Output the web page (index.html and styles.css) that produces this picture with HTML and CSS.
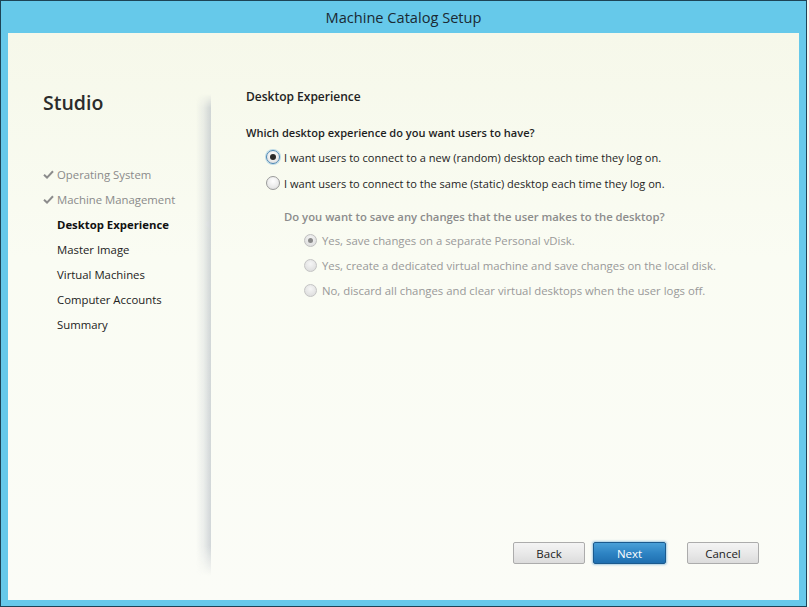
FILE: index.html
```html
<!DOCTYPE html>
<html lang="en">
<head>
<meta charset="utf-8">
<title>Machine Catalog Setup</title>
<link rel="stylesheet" href="styles.css">
</head>
<body>
<div class="window">
  <div class="titlebar">Machine Catalog Setup</div>
  <div class="client">
    <aside class="sidebar">
      <div class="brand">Studio</div>
      <ul class="steps">
        <li class="step done"><svg class="check" width="11" height="9" viewBox="0 0 11 9"><path d="M1 4.8 L4 7.6 L10 1.2" fill="none" stroke="#8c8c8c" stroke-width="2"/></svg>Operating System</li>
        <li class="step done"><svg class="check" width="11" height="9" viewBox="0 0 11 9"><path d="M1 4.8 L4 7.6 L10 1.2" fill="none" stroke="#8c8c8c" stroke-width="2"/></svg>Machine Management</li>
        <li class="step active">Desktop Experience</li>
        <li class="step">Master Image</li>
        <li class="step">Virtual Machines</li>
        <li class="step">Computer Accounts</li>
        <li class="step">Summary</li>
      </ul>
    </aside>
    <main class="panel">
      <h1 class="page-title">Desktop Experience</h1>
      <p class="question">Which desktop experience do you want users to have?</p>
      <div class="options">
        <label class="option"><span class="radio checked"></span>I want users to connect to a new (random) desktop each time they log on.</label>
        <label class="option"><span class="radio"></span>I want users to connect to the same (static) desktop each time they log on.</label>
      </div>
      <div class="subgroup">
        <p class="subquestion">Do you want to save any changes that the user makes to the desktop?</p>
        <div class="suboptions">
          <label class="option disabled"><span class="radio small checked"></span>Yes, save changes on a separate Personal vDisk.</label>
          <label class="option disabled"><span class="radio small"></span>Yes, create a dedicated virtual machine and save changes on the local disk.</label>
          <label class="option disabled"><span class="radio small"></span>No, discard all changes and clear virtual desktops when the user logs off.</label>
        </div>
      </div>
      <div class="actions">
        <button class="btn">Back</button>
        <button class="btn primary">Next</button>
        <button class="btn cancel">Cancel</button>
      </div>
    </main>
  </div>
</div>
</body>
</html>
```

FILE: styles.css
```css
html, body {
  margin: 0;
  padding: 0;
  background: #f4f6f2;
}

body {
  font-family: "Open Sans", "Noto Sans", "Liberation Sans", sans-serif;
  font-size: 11.05px;
  color: #1e1e1e;
}

.window {
  box-sizing: border-box;
  width: 807px;
  height: 607px;
  border: 1px solid #1d4456;
  background: #66c9ea;
  display: flex;
  flex-direction: column;
}

.titlebar {
  height: 32px;
  line-height: 33px;
  text-align: center;
  font-size: 14.6px;
  color: #1a2a33;
  flex: none;
}

.client {
  flex: 1;
  margin: 0 7px 6px 7px;
  background: linear-gradient(to bottom, #f6f8ea 0%, #fafcf3 40%, #fbfcf7 100%);
  display: grid;
  grid-template-columns: 203px 1fr;
  min-height: 0;
}

.sidebar {
  padding-top: 56px;
}

.brand {
  padding-left: 35px;
  font-size: 19.5px;
  font-weight: 600;
  line-height: 28px;
  color: #2b2b2b;
}

.steps {
  list-style: none;
  margin: 45px 0 0 0;
  padding: 0;
}

.step {
  position: relative;
  height: 25px;
  line-height: 25px;
  padding-left: 49px;
  font-size: 11.35px;
  color: #222;
  white-space: nowrap;
}

.step.done {
  color: #8a8a8a;
}

.check {
  position: absolute;
  left: 35px;
  top: 8px;
}

.step.active {
  font-weight: 700;
  color: #111;
}

.step.active::after {
  content: "";
  position: absolute;
  right: 0;
  top: 6px;
  border-style: solid;
  border-width: 6px 6px 6px 0;
  border-color: transparent #fbfcf6 transparent transparent;
}

.panel {
  position: relative;
  margin: 55px 0 24px 0;
  padding: 0 0 0 35px;
  display: flex;
  flex-direction: column;
}

.panel::before {
  content: "";
  position: absolute;
  left: -15px;
  width: 15px;
  top: 6px;
  bottom: 0;
  background: linear-gradient(to right, rgba(200, 205, 212, 0) 0%, rgba(190, 196, 204, 0.25) 50%, rgba(175, 183, 192, 0.55) 100%);
  -webkit-mask-image: linear-gradient(to bottom, transparent 0, #000 14px, #000 calc(100% - 30px), transparent 100%);
  mask-image: linear-gradient(to bottom, transparent 0, #000 14px, #000 calc(100% - 30px), transparent 100%);
  pointer-events: none;
}

.page-title {
  margin: 0;
  font-size: 12px;
  font-weight: 600;
  line-height: 18px;
  color: #222;
}

.question {
  margin: 18px 0 0 0;
  font-weight: 600;
  line-height: 18px;
  color: #1e1e1e;
}

.options {
  margin-top: 2px;
  padding-left: 20px;
}

.option {
  display: flex;
  align-items: center;
  height: 26px;
  white-space: nowrap;
}

.radio {
  box-sizing: border-box;
  width: 14px;
  height: 14px;
  border-radius: 50%;
  border: 1px solid #9a9a9a;
  background: radial-gradient(circle at 50% 35%, #ffffff 0%, #eaeaea 60%, #d6d6d6 100%);
  margin-right: 4px;
  position: relative;
  flex: none;
}

.radio.checked {
  border-color: #4a86b4;
  box-shadow: 0 0 0 1px rgba(120, 180, 220, 0.45);
}

.radio.checked::after {
  content: "";
  position: absolute;
  left: 3px;
  top: 3px;
  width: 6px;
  height: 6px;
  border-radius: 50%;
  background: #2a2a2a;
}

.subgroup {
  margin-top: 12px;
  padding-left: 38px;
}

.subquestion {
  margin: 0;
  font-size: 11.3px;
  font-weight: 600;
  line-height: 18px;
  color: #8c8c8c;
}

.suboptions {
  margin-top: 2px;
  padding-left: 20px;
}

.option.disabled {
  height: 25px;
  font-size: 11.35px;
  color: #999;
}

.radio.small {
  width: 13px;
  height: 13px;
  border-color: #c4c4c4;
  background: radial-gradient(circle at 50% 35%, #f6f6f6 0%, #e4e4e4 60%, #d8d8d8 100%);
  margin-right: 5px;
}

.radio.small.checked {
  box-shadow: none;
  border-color: #c0c0c0;
}

.radio.small.checked::after {
  left: 3px;
  top: 3px;
  width: 5px;
  height: 5px;
  background: #8a8a8a;
}

.actions {
  margin-top: auto;
  padding: 0 40px 12px 0;
  display: flex;
  justify-content: flex-end;
}

.btn {
  box-sizing: border-box;
  width: 72px;
  height: 22px;
  padding: 0;
  font-family: inherit;
  font-size: 11.5px;
  color: #222;
  border: 1px solid #acacac;
  border-radius: 2px;
  background: linear-gradient(to bottom, #f4f4f4 0%, #e9e9e9 50%, #dcdcdc 100%);
}

.btn.primary {
  margin-left: 8px;
  width: 73px;
  color: #fff;
  border-color: #1b5a8e;
  background: linear-gradient(to bottom, #4aa0d8 0%, #2e84c4 50%, #1f6fb0 100%);
  box-shadow: 0 0 2px 1px rgba(90, 160, 210, 0.5);
}

.btn.cancel {
  margin-left: 21px;
}
```
